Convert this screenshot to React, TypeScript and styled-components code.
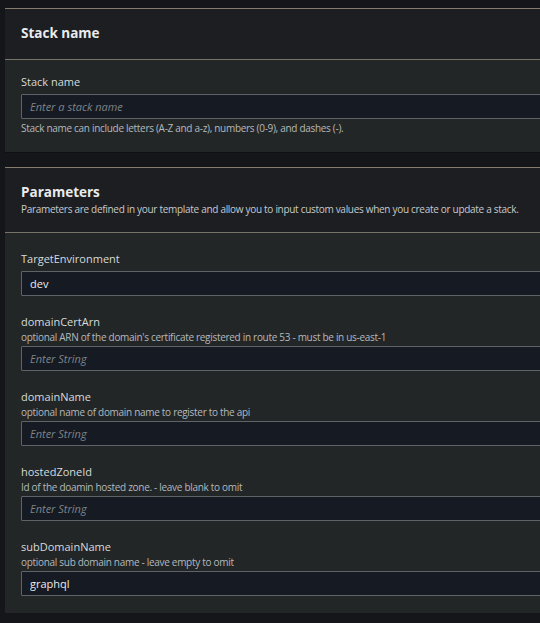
import React from 'react';
import styled, { createGlobalStyle } from 'styled-components';

type Param = {
  name: string;
  description?: string;
  value?: string;
};

const params: Param[] = [
  { name: 'TargetEnvironment', value: 'dev' },
  {
    name: 'domainCertArn',
    description: "optional ARN of the domain's certificate registered in route 53 - must be in us-east-1",
  },
  { name: 'domainName', description: 'optional name of domain name to register to the api' },
  { name: 'hostedZoneId', description: 'Id of the doamin hosted zone. - leave blank to omit' },
  { name: 'subDomainName', description: 'optional sub domain name - leave empty to omit', value: 'graphql' },
];

const App: React.FC = () => {
  return (
    <>
      <GlobalStyle />
      <Page>
        <Panel>
          <PanelHeader>
            <PanelTitle>Stack name</PanelTitle>
          </PanelHeader>
          <PanelBody $top={14}>
            <Field>
              <Label>Stack name</Label>
              <TextInput placeholder="Enter a stack name" readOnly />
              <Hint>Stack name can include letters (A-Z and a-z), numbers (0-9), and dashes (-).</Hint>
            </Field>
          </PanelBody>
        </Panel>
        <Panel>
          <PanelHeader>
            <PanelTitle>Parameters</PanelTitle>
            <PanelDescription>
              Parameters are defined in your template and allow you to input custom values when you create or update a stack.
            </PanelDescription>
          </PanelHeader>
          <PanelBody $top={18}>
            <FieldList>
              {params.map((p) => (
                <Field key={p.name}>
                  <Label>{p.name}</Label>
                  {p.description && <Description>{p.description}</Description>}
                  <TextInput
                    $afterDescription={!!p.description}
                    placeholder="Enter String"
                    defaultValue={p.value}
                    readOnly
                  />
                </Field>
              ))}
            </FieldList>
          </PanelBody>
        </Panel>
      </Page>
    </>
  );
};

export default App;

const bodyFont = `'Open Sans', 'Noto Sans', sans-serif`;

const GlobalStyle = createGlobalStyle`
  html, body {
    margin: 0;
    padding: 0;
    background: #14161a;
    overflow: hidden;
  }
  body {
    font-family: ${bodyFont};
  }
`;

const Page = styled.div`
  width: 620px;
  padding: 8px 0 0 5px;
  display: flex;
  flex-direction: column;
  gap: 15px;
`;

const Panel = styled.section`
  border-top: 1px solid #857e70;
  background: #232627;
  box-shadow: 0 1px 0 #0e1013;
`;

const PanelHeader = styled.div`
  background: #1c1e22;
  padding: 14px 16px 16px;
  border-bottom: 1px solid #777369;
`;

const PanelTitle = styled.h2`
  margin: 0;
  font-size: 13.5px;
  line-height: 20px;
  font-weight: 700;
  color: #e9ebed;
`;

const smallText = `
  font-size: 10px;
  line-height: 14px;
  letter-spacing: -0.3px;
`;

const PanelDescription = styled.p`
  margin: 0;
  ${smallText}
  color: #c6cacd;
`;

const PanelBody = styled.div<{ $top: number }>`
  padding: ${(p) => p.$top}px 16px 17px;
`;

const FieldList = styled.div`
  display: flex;
  flex-direction: column;
  gap: 18px;
`;

const Field = styled.div`
  display: flex;
  flex-direction: column;
`;

const Label = styled.label`
  font-size: 11px;
  line-height: 16px;
  color: #d5dbdb;
`;

const Description = styled.span`
  ${smallText}
  color: #b4b9bd;
`;

const TextInput = styled.input<{ $afterDescription?: boolean }>`
  box-sizing: border-box;
  margin-top: ${(p) => (p.$afterDescription ? 2 : 4)}px;
  width: 100%;
  height: 25px;
  padding: 0 8px;
  background: #161a22;
  border: 1px solid #5f6266;
  border-radius: 1px;
  font-family: ${bodyFont};
  font-size: 11px;
  color: #e9ebed;
  outline: none;

  &::placeholder {
    font-style: italic;
    color: #7d8388;
  }
`;

const Hint = styled.span`
  margin-top: 2px;
  ${smallText}
  color: #b4b9bd;
`;
